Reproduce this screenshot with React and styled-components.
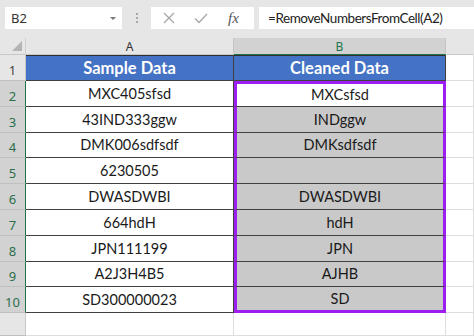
import React from "react";
import styled, { createGlobalStyle } from "styled-components";

const GlobalStyle = createGlobalStyle`
  html, body {
    margin: 0;
    padding: 0;
    background: #ffffff;
  }
  body {
    font-family: Lato, "Noto Sans", sans-serif;
    overflow: hidden;
  }
`;

const Page = styled.div`
  width: 474px;
  height: 336px;
  overflow: hidden;
  background: #e6e6e6;
`;

const Toolbar = styled.div`
  display: flex;
  align-items: center;
  height: 30px;
  padding: 0 0 8px 0;
  box-sizing: content-box;
`;

const NameBox = styled.div`
  display: flex;
  flex-shrink: 0;
  align-items: center;
  justify-content: space-between;
  width: 117px;
  height: 22px;
  margin: 6px 0 0 5px;
  padding: 0 6px 0 6px;
  box-sizing: border-box;
  background: #ffffff;
  color: #333333;
  font-family: "Noto Sans", sans-serif;
  font-size: 13px;
`;

const Caret = styled.span`
  width: 0;
  height: 0;
  border-left: 3px solid transparent;
  border-right: 3px solid transparent;
  border-top: 3px solid #777777;
`;

const Grip = styled.div`
  display: flex;
  flex-shrink: 0;
  flex-direction: column;
  gap: 2px;
  margin: 6px 13px 0 14px;

  span {
    width: 2px;
    height: 2px;
    background: #a8a8a8;
  }
`;

const FxBox = styled.div`
  display: flex;
  flex-shrink: 0;
  align-items: center;
  width: 103px;
  height: 22px;
  margin-top: 6px;
  padding-left: 11px;
  gap: 17px;
  box-sizing: border-box;
  background: #ffffff;
`;

const Fx = styled.span`
  font-family: "Liberation Serif", serif;
  font-style: italic;
  font-size: 15px;
  color: #555555;
  margin-left: 2px;
`;

const FormulaInput = styled.div`
  flex: 1;
  min-width: 0;
  height: 22px;
  margin: 6px 0 0 5px;
  padding-left: 9px;
  box-sizing: border-box;
  background: #ffffff;
  color: #222222;
  font-size: 13.5px;
  letter-spacing: -0.45px;
  line-height: 22px;
  white-space: nowrap;
  overflow: hidden;
`;

const Sheet = styled.div`
  display: grid;
  grid-template-columns: 26px 208px 212px 1fr;
  grid-template-rows: 17px 26px repeat(9, 25.8px) 1fr;
  height: 298px;
  background: #ffffff;
`;

const Corner = styled.div`
  position: relative;
  background: #e6e6e6;
  border-right: 1px solid #d0d0d0;
  border-bottom: 1px solid #c8c8c8;

  &::after {
    content: "";
    position: absolute;
    right: 3px;
    bottom: 3px;
    border-left: 10px solid transparent;
    border-bottom: 10px solid #b4b4b4;
  }
`;

const ColHead = styled.div`
  display: flex;
  align-items: center;
  justify-content: center;
  background: ${(p) => (p.$active ? "#d2d2d2" : "#e6e6e6")};
  color: ${(p) => (p.$active ? "#217346" : "#333333")};
  border-right: 1px solid ${(p) => (p.$last ? "transparent" : "#c4c4c4")};
  border-bottom: 1px solid ${(p) => (p.$active ? "#217346" : "#c8c8c8")};
  font-family: "Noto Sans", sans-serif;
  font-size: 12px;
`;

const RowHead = styled.div`
  display: flex;
  align-items: flex-end;
  justify-content: center;
  padding-bottom: 1px;
  background: ${(p) => (p.$active ? "#d2d2d2" : "#e6e6e6")};
  color: ${(p) => (p.$active ? "#2b6e4c" : "#444444")};
  border-bottom: 1px solid #bfbfbf;
  border-right: 1px solid ${(p) => (p.$active ? "#217346" : "#c8c8c8")};
  font-family: "Noto Sans", sans-serif;
  font-size: 13px;
  box-sizing: border-box;
`;

const Cell = styled.div`
  display: flex;
  align-items: center;
  justify-content: center;
  box-sizing: border-box;
  background: #ffffff;
  color: #1a1a1a;
  font-size: 14.5px;
  border-bottom: 1px solid #404040;
  border-right: 1px solid #404040;
  white-space: nowrap;
`;

const HeadCell = styled(Cell)`
  background: #4472c4;
  color: #ffffff;
  font-weight: 700;
  font-size: 16.5px;
  border-top: 1px solid #2f2f2f;
`;

const PickCell = styled(Cell)`
  background: ${(p) => (p.$first ? "#ffffff" : "#c9c9c9")};
  border-left: 3px solid #9b1ff1;
  border-right: 3px solid #9b1ff1;
  border-top: ${(p) => (p.$first ? "3px solid #9b1ff1" : "none")};
  border-bottom: ${(p) => (p.$last ? "3px solid #9b1ff1" : "1px solid #404040")};
`;

const Blank = styled.div`
  background: #ffffff;
  border-bottom: 1px solid #dedede;
  border-right: 1px solid #dedede;
`;

const rows = [
  ["MXC405sfsd", "MXCsfsd"],
  ["43IND333ggw", "INDggw"],
  ["DMK006sdfsdf", "DMKsdfsdf"],
  ["6230505", ""],
  ["DWASDWBI", "DWASDWBI"],
  ["664hdH", "hdH"],
  ["JPN111199", "JPN"],
  ["A2J3H4B5", "AJHB"],
  ["SD300000023", "SD"],
];

const Cross = () => (
  <svg width="14" height="14" viewBox="0 0 14 14">
    <path d="M2 2 L12 12 M12 2 L2 12" stroke="#a6a6a6" strokeWidth="1.3" fill="none" />
  </svg>
);

const Check = () => (
  <svg width="16" height="14" viewBox="0 0 16 14">
    <path d="M2 7.5 L6 11.5 L14 3" stroke="#a6a6a6" strokeWidth="1.3" fill="none" />
  </svg>
);

export default function App() {
  return (
    <Page>
      <GlobalStyle />
      <Toolbar>
        <NameBox>
          B2
          <Caret />
        </NameBox>
        <Grip>
          <span />
          <span />
          <span />
        </Grip>
        <FxBox>
          <Cross />
          <Check />
          <Fx>fx</Fx>
        </FxBox>
        <FormulaInput>=RemoveNumbersFromCell(A2)</FormulaInput>
      </Toolbar>

      <Sheet>
        <Corner />
        <ColHead>A</ColHead>
        <ColHead $active>B</ColHead>
        <ColHead $last />

        <RowHead>1</RowHead>
        <HeadCell>Sample Data</HeadCell>
        <HeadCell>Cleaned Data</HeadCell>
        <Blank />

        {rows.map(([a, b], i) => (
          <React.Fragment key={a}>
            <RowHead $active>{i + 2}</RowHead>
            <Cell>{a}</Cell>
            <PickCell $first={i === 0} $last={i === rows.length - 1}>
              {b}
            </PickCell>
            <Blank />
          </React.Fragment>
        ))}

        <RowHead />
        <Blank />
        <Blank />
        <Blank />
      </Sheet>
    </Page>
  );
}
